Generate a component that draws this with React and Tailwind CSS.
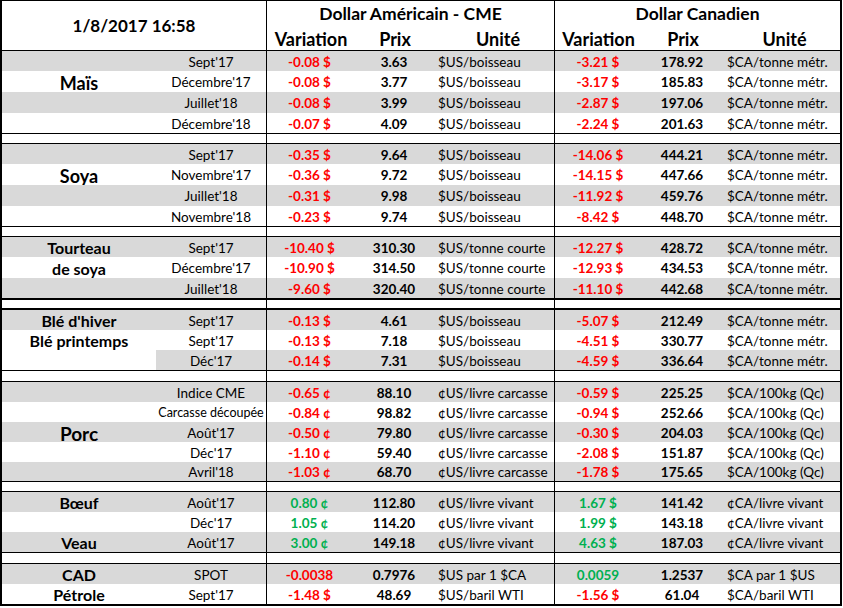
const GRAY = "bg-[#d9d9d9]";
const COLS = "grid grid-cols-[154px_110px_86px_84px_118px_87px_82px_117px]";
const H20 = "h-[20px]";
const H21 = "h-[21px]";
const H19 = "h-[19px]";

const groups = [
  {
    hs: [H20, H21, H21, H20],
    names: { 1: "Maïs" },
    nameCls: "text-[18px]",
    border: "border-b border-black",
    rows: [
      ["Sept'17", "-0.08 $", "3.63", "$US/boisseau", "-3.21 $", "178.92", "$CA/tonne métr."],
      ["Décembre'17", "-0.08 $", "3.77", "$US/boisseau", "-3.17 $", "185.83", "$CA/tonne métr."],
      ["Juillet'18", "-0.08 $", "3.99", "$US/boisseau", "-2.87 $", "197.06", "$CA/tonne métr."],
      ["Décembre'18", "-0.07 $", "4.09", "$US/boisseau", "-2.24 $", "201.63", "$CA/tonne métr."],
    ],
  },
  {
    hs: [H20, H21, H21, H20],
    names: { 1: "Soya" },
    nameCls: "text-[18px]",
    border: "border-b border-black",
    rows: [
      ["Sept'17", "-0.35 $", "9.64", "$US/boisseau", "-14.06 $", "444.21", "$CA/tonne métr."],
      ["Novembre'17", "-0.36 $", "9.72", "$US/boisseau", "-14.15 $", "447.66", "$CA/tonne métr."],
      ["Juillet'18", "-0.31 $", "9.98", "$US/boisseau", "-11.92 $", "459.76", "$CA/tonne métr."],
      ["Novembre'18", "-0.23 $", "9.74", "$US/boisseau", "-8.42 $", "448.70", "$CA/tonne métr."],
    ],
  },
  {
    hs: [H20, H21, H20],
    names: { 0: "Tourteau", 1: "de soya" },
    nameCls: "text-[16px]",
    border: "border-b-2 border-black",
    rows: [
      ["Sept'17", "-10.40 $", "310.30", "$US/tonne courte", "-12.27 $", "428.72", "$CA/tonne métr."],
      ["Décembre'17", "-10.90 $", "314.50", "$US/tonne courte", "-12.93 $", "434.53", "$CA/tonne métr."],
      ["Juillet'18", "-9.60 $", "320.40", "$US/tonne courte", "-11.10 $", "442.68", "$CA/tonne métr."],
    ],
  },
  {
    hs: [H20, H20, H20],
    names: { 0: "Blé d'hiver", 1: "Blé printemps" },
    nameCls: "text-[16px]",
    border: "border-b border-black",
    whiteName: 2,
    rows: [
      ["Sept'17", "-0.13 $", "4.61", "$US/boisseau", "-5.07 $", "212.49", "$CA/tonne métr."],
      ["Sept'17", "-0.13 $", "7.18", "$US/boisseau", "-4.51 $", "330.77", "$CA/tonne métr."],
      ["Déc'17", "-0.14 $", "7.31", "$US/boisseau", "-4.59 $", "336.64", "$CA/tonne métr."],
    ],
  },
  {
    hs: [H20, H20, H20, H20, H19],
    names: { 2: "Porc" },
    nameCls: "text-[19px]",
    border: "border-b border-black",
    rows: [
      ["Indice CME", "-0.65 ¢", "88.10", "¢US/livre carcasse", "-0.59 $", "225.25", "$CA/100kg (Qc)"],
      ["Carcasse découpée", "-0.84 ¢", "98.82", "¢US/livre carcasse", "-0.94 $", "252.66", "$CA/100kg (Qc)", true],
      ["Août'17", "-0.50 ¢", "79.80", "¢US/livre carcasse", "-0.30 $", "204.03", "$CA/100kg (Qc)"],
      ["Déc'17", "-1.10 ¢", "59.40", "¢US/livre carcasse", "-2.08 $", "151.87", "$CA/100kg (Qc)"],
      ["Avril'18", "-1.03 ¢", "68.70", "¢US/livre carcasse", "-1.78 $", "175.65", "$CA/100kg (Qc)"],
    ],
  },
  {
    hs: [H20, H20, H20],
    names: { 0: "Bœuf", 2: "Veau" },
    nameCls: "text-[16px]",
    border: "border-b border-black",
    rows: [
      ["Août'17", "0.80 ¢", "112.80", "¢US/livre vivant", "1.67 $", "141.42", "¢CA/livre vivant"],
      ["Déc'17", "1.05 ¢", "114.20", "¢US/livre vivant", "1.99 $", "143.18", "¢CA/livre vivant"],
      ["Août'17", "3.00 ¢", "149.18", "¢US/livre vivant", "4.63 $", "187.03", "¢CA/livre vivant"],
    ],
  },
  {
    hs: [H20, H20],
    names: { 0: "CAD", 1: "Pétrole" },
    nameCls: "text-[16px]",
    border: "border-b-2 border-black",
    rows: [
      ["SPOT", "-0.0038", "0.7976", "$US par 1 $CA", "0.0059", "1.2537", "$CA par 1 $US"],
      ["Sept'17", "-1.48 $", "48.69", "$US/baril WTI", "-1.56 $", "61.04", "$CA/baril WTI"],
    ],
  },
];

// separator rows: height includes their bottom border
const seps = [
  "h-[10px] border-b border-black",
  "h-[10px] border-b border-black",
  "h-[10px] border-b-2 border-black",
  "h-[11px] border-b border-black",
  "h-[10px] border-b border-black",
  "h-[11px] border-b border-black",
];

const varColor = (v) => (v.startsWith("-") ? "text-[#ff0000]" : "text-[#00b050]");

function Row({ r, i, g }) {
  const gray = i % 2 === 0;
  const bg = gray ? GRAY : "bg-white";
  const nameBg = gray && g.whiteName !== i ? GRAY : "bg-white";
  const name = g.names[i];
  const [contract, uv, up, uu, cv, cp, cu, small] = r;
  return (
    <div className={`${COLS} ${g.hs[i]} ${bg} leading-none`}>
      <div className={`${nameBg} flex items-center justify-center font-bold pt-[2px] ${g.nameCls}`}>
        {name}
      </div>
      <div
        className={`flex items-center justify-center whitespace-nowrap pt-[3px] ${
          small ? "text-[12.5px]" : "text-[13.5px]"
        }`}
      >
        {contract}
      </div>
      <div className={`border-l border-black flex items-center justify-center font-bold text-[13.5px] pt-[3px] ${varColor(uv)}`}>
        {uv}
      </div>
      <div className="flex items-center justify-center font-bold text-[13.5px] pt-[3px]">{up}</div>
      <div className="flex items-center pl-[2px] text-[13.5px] whitespace-nowrap pt-[3px]">{uu}</div>
      <div className={`border-l border-black flex items-center justify-center font-bold text-[13.5px] pt-[3px] ${varColor(cv)}`}>
        {cv}
      </div>
      <div className="flex items-center justify-center font-bold text-[13.5px] pt-[3px]">{cp}</div>
      <div className="flex items-center pl-[4px] text-[13.5px] whitespace-nowrap pt-[3px]">{cu}</div>
    </div>
  );
}

function Sep({ cls }) {
  return (
    <div className={`${COLS} ${cls} bg-white`}>
      <div />
      <div />
      <div className="border-l border-black" />
      <div />
      <div />
      <div className="border-l border-black" />
      <div />
      <div />
    </div>
  );
}

export default function App() {
  return (
    <div className="w-[843px] h-[608px] bg-white text-black font-['Lato','Liberation_Sans',sans-serif] overflow-hidden">
      <div className="w-[842px] border-l-2 border-r-2 border-t border-black">
        {/* header */}
        <div className={`${COLS} h-[50px] border-b border-black`}>
          <div className="col-span-2 flex items-center justify-center font-bold text-[17px] pt-px">
            1/8/2017 16:58
          </div>
          <div className="col-span-3 border-l border-black flex flex-col">
            <div className="h-[24px] flex items-center justify-center font-bold text-[17.5px] pt-[3px]">
              Dollar Américain - CME
            </div>
            <div className="grid grid-cols-[86px_84px_118px] h-[25px] font-bold text-[18px] pt-px">
              <div className="flex items-center justify-center pl-[2px]">Variation</div>
              <div className="flex items-center justify-center">Prix</div>
              <div className="flex items-center justify-center pl-[4px]">Unité</div>
            </div>
          </div>
          <div className="col-span-3 border-l border-black flex flex-col">
            <div className="h-[24px] flex items-center justify-center font-bold text-[17.5px] pt-[3px]">
              Dollar Canadien
            </div>
            <div className="grid grid-cols-[87px_82px_117px] h-[25px] font-bold text-[18px] pt-px">
              <div className="flex items-center justify-center">Variation</div>
              <div className="flex items-center justify-center">Prix</div>
              <div className="flex items-center justify-center pl-[4px]">Unité</div>
            </div>
          </div>
        </div>
        {groups.map((g, gi) => (
          <div key={gi}>
            <div className={g.border}>
              {g.rows.map((r, i) => (
                <Row key={i} r={r} i={i} g={g} />
              ))}
            </div>
            {gi < seps.length && <Sep cls={seps[gi]} />}
          </div>
        ))}
      </div>
    </div>
  );
}
